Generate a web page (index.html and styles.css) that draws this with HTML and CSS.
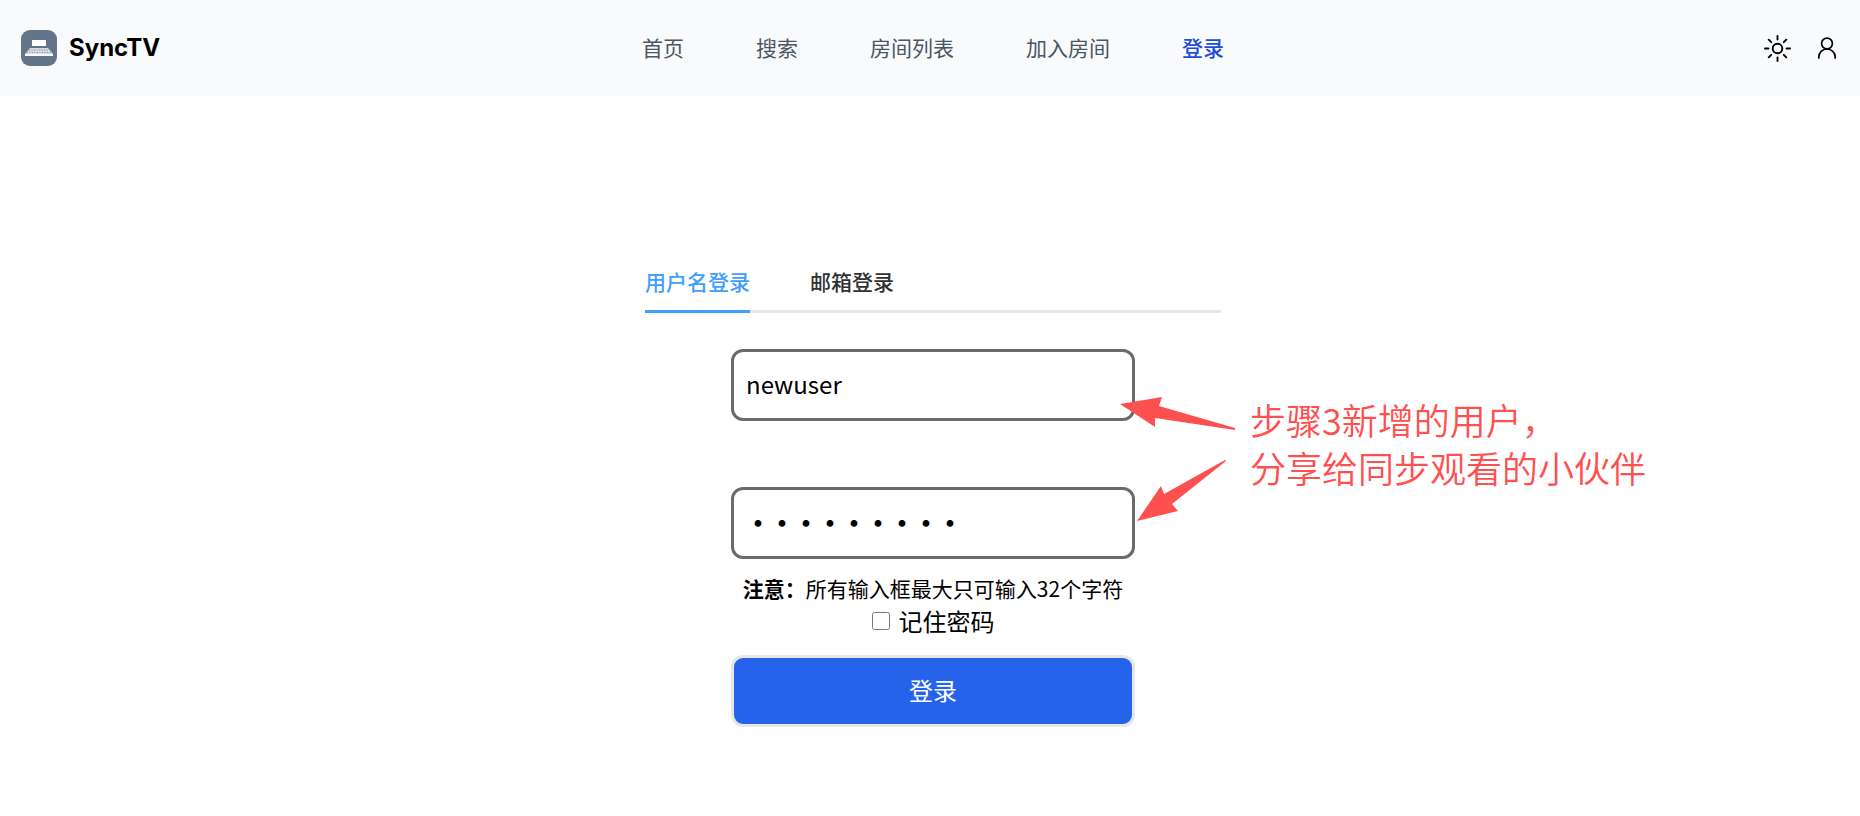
FILE: index.html
```html
<!DOCTYPE html>
<html lang="zh-CN">
<head>
  <meta charset="UTF-8">
  <title>SyncTV</title>
  <link rel="stylesheet" href="styles.css">
</head>
<body>
  <header class="navbar">
    <a class="brand" href="#">
      <svg class="brand-logo" viewBox="0 0 36 36" aria-hidden="true">
        <rect width="36" height="36" rx="9" fill="#64748b"/>
        <rect x="11" y="10" width="14" height="6" fill="#fff"/>
        <path d="M9 18h18l5 6v2H4v-2z" fill="#d5dae1"/>
        <path d="M4 25h28" stroke="#fff" stroke-width="2"/>
        <path d="M8 20h20M6 22.500h24" stroke="#8793a5" stroke-dasharray="1 1.500" stroke-width="1"/>
      </svg>
      <span>SyncTV</span>
    </a>
    <nav class="nav-links">
      <a href="#">首页</a>
      <a href="#">搜索</a>
      <a href="#">房间列表</a>
      <a href="#">加入房间</a>
      <a href="#" class="active">登录</a>
    </nav>
    <div class="nav-actions">
      <button type="button" class="icon-btn" aria-label="切换主题">
        <svg viewBox="0 0 36 36" fill="none" stroke="#000" stroke-width="1.900" stroke-linecap="round">
          <circle cx="18.500" cy="18.500" r="4.800"/>
          <path d="M18.500 6v3.500M18.500 27.500V31M6 18.500h3.500M27.500 18.500H31M9.700 9.700l2.500 2.500M24.800 24.800l2.500 2.500M9.700 27.300l2.500-2.500M24.800 12.200l2.500-2.500"/>
        </svg>
      </button>
      <button type="button" class="icon-btn" aria-label="用户">
        <svg viewBox="0 0 36 36" fill="none" stroke="#000" stroke-width="1.700" stroke-linecap="round">
          <circle cx="18" cy="13.500" r="5.400"/>
          <path d="M9.800 28v-1a8.200 8 0 0 1 16.400 0v1"/>
        </svg>
      </button>
    </div>
  </header>

  <main class="login">
    <div class="login-box">
      <div class="tabs">
        <button type="button" class="tab active">用户名登录</button>
        <button type="button" class="tab">邮箱登录</button>
      </div>
      <form class="login-form">
        <input type="text" class="field" value="newuser" aria-label="用户名">
        <input type="password" class="field" value="newuser12" aria-label="密码">
        <p class="note"><b>注意：</b>所有输入框最大只可输入32个字符</p>
        <label class="remember">
          <input type="checkbox">
          记住密码
        </label>
        <button type="submit" class="submit-btn">登录</button>

        <!-- hint pointing at the two fields -->
        <div class="hint">
          <svg class="hint-arrows" viewBox="0 0 116 126" aria-hidden="true">
            <path d="M0 7L42 0l-3 9 76 22v2L35 21v9z"/>
            <path d="M17 124l24-35 3 8 61-34 1 1-54 43 6 7z"/>
          </svg>
          <p class="hint-text">步骤3新增的用户，<br>分享给同步观看的小伙伴</p>
        </div>
      </form>
    </div>
  </main>
</body>
</html>
```
FILE: styles.css
```css
* {
  box-sizing: border-box;
}

body {
  margin: 0;
  background: #fff;
  color: #000;
  font-family: "Noto Sans CJK SC", sans-serif;
  font-size: 21px;
}

button,
input {
  font-family: inherit;
}

.navbar {
  display: grid;
  grid-template-columns: 1fr auto 1fr;
  align-items: center;
  height: 96px;
  padding: 0 15px 0 21px;
  background: #f9fafc;
}

.brand {
  display: flex;
  align-items: center;
  gap: 12px;
  color: #000;
  font-family: Inter, sans-serif;
  font-size: 24px;
  font-weight: bold;
  line-height: 36px;
  text-decoration: none;
}

.brand-logo {
  width: 36px;
  height: 36px;
}

.nav-links {
  display: flex;
  gap: 72px;
  padding-bottom: 2px;
}

.nav-links a {
  color: #4b5563;
  text-decoration: none;
}

.nav-links a.active {
  color: #1d4ed8;
  font-weight: 500;
}

.nav-actions {
  display: flex;
  justify-content: flex-end;
  gap: 14px;
}

.icon-btn {
  width: 36px;
  height: 36px;
  padding: 0;
  border: none;
  background: none;
  cursor: pointer;
}

.icon-btn svg {
  display: block;
}

.login {
  padding: 157px 0 0 6px;
}

.login-box {
  max-width: 576px;
  margin: 0 auto;
}

.tabs {
  display: flex;
  gap: 60px;
  box-shadow: inset 0 -3px #e4e7ed;
}

.tab {
  height: 60px;
  padding: 0 0 4px;
  border: none;
  background: none;
  color: #303133;
  font-size: 21px;
  font-weight: 500;
  cursor: pointer;
}

.tab.active {
  color: #409eff;
  box-shadow: inset 0 -3px #409eff;
}

.login-form {
  position: relative;
  display: flex;
  flex-direction: column;
  align-items: center;
  max-width: 404px;
  margin: 36px auto 0;
}

.field {
  width: 100%;
  height: 72px;
  padding: 0 12px 4px;
  border: 3px solid #6b6b6b;
  border-radius: 12px;
  background: #fff;
  color: #000;
  font-size: 24px;
}

.field[type="password"] {
  font-weight: 900;
}

.field + .field {
  margin-top: 66px;
}

.note {
  margin: 14px 0 0;
  line-height: 30px;
  white-space: nowrap;
}

.remember {
  display: flex;
  align-items: center;
  gap: 9px;
  font-size: 24px;
  line-height: 36px;
}

.remember input {
  width: 18px;
  height: 18px;
  margin: 0;
}

.submit-btn {
  width: 100%;
  height: 72px;
  margin-top: 16px;
  padding: 0 0 4px;
  border: 3px solid #e5e7eb;
  border-radius: 12px;
  background: #2563eb;
  color: #fff;
  font-size: 24px;
  cursor: pointer;
}

.hint {
  position: absolute;
  top: 46px;
  left: 389px;
  display: flex;
  gap: 14px;
  color: #ff5050;
}

.hint-arrows {
  width: 116px;
  height: 126px;
  margin-top: 2px;
  fill: currentColor;
}

.hint-text {
  margin: 0;
  font-size: 36px;
  font-weight: 350;
  line-height: 48px;
  white-space: nowrap;
}
```
